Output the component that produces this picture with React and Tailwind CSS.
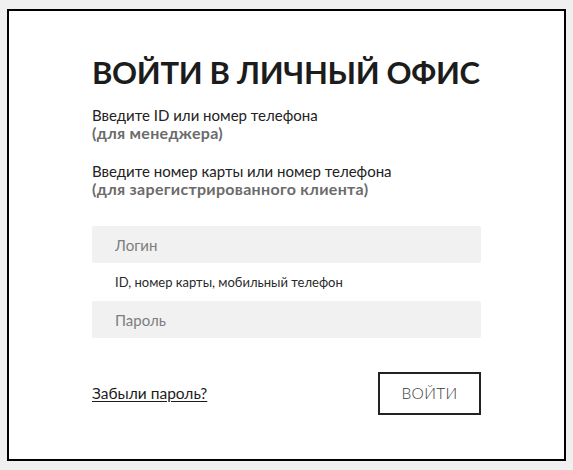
import React from "react";

const font = { fontFamily: "Lato, 'Noto Sans', sans-serif" };

const LoginCard = () => {
  return (
    <div className="min-h-[470px] bg-[#f0f0f0] px-[7px] pt-[9px] pb-[9px]" style={font}>
      <div className="h-[452px] border-2 border-black bg-white pl-[83px] pr-[83px] pt-[42px]">
        <h1 className="text-[31px] leading-[38px] font-bold tracking-[-0.3px] text-[#1c1c1c] whitespace-nowrap">
          ВОЙТИ В ЛИЧНЫЙ ОФИС
        </h1>

        <div className="mt-[16px] text-[15px] leading-[17px] text-[#222]">
          <p>Введите ID или номер телефона</p>
          <p className="font-bold text-[16px] tracking-[0.3px] text-[#6b6b6b]">(для менеджера)</p>
        </div>

        <div className="mt-[22px] text-[15px] leading-[17px] text-[#222]">
          <p>Введите номер карты или номер телефона</p>
          <p className="font-bold text-[16px] tracking-[0.3px] text-[#6b6b6b]">
            (для зарегистрированного клиента)
          </p>
        </div>

        <form className="mt-[29px]" onSubmit={(e) => e.preventDefault()}>
          <input
            type="text"
            placeholder="Логин"
            className="block w-full h-[37px] rounded-[2px] bg-[#f1f1f1] pl-[23px] text-[15px] text-[#333] placeholder:text-[#7d7d7d] outline-none"
          />
          <p className="pl-[23px] mt-[12px] text-[13px] leading-[15px] text-[#2a2a2a]">
            ID, номер карты, мобильный телефон
          </p>
          <input
            type="password"
            placeholder="Пароль"
            className="mt-[11px] block w-full h-[37px] rounded-[2px] bg-[#f1f1f1] pl-[23px] text-[15px] text-[#333] placeholder:text-[#7d7d7d] outline-none"
          />

          <div className="mt-[34px] flex items-center justify-between">
            <a href="#" className="text-[15.5px] text-[#1c1c1c] underline underline-offset-2">
              Забыли пароль?
            </a>
            <button
              type="submit"
              className="w-[103px] h-[43px] border-2 border-[#222] text-[15.5px] font-light text-[#3a3a3a] tracking-[0.3px]"
            >
              ВОЙТИ
            </button>
          </div>
        </form>
      </div>
    </div>
  );
};

export default function App() {
  return <LoginCard />;
}
